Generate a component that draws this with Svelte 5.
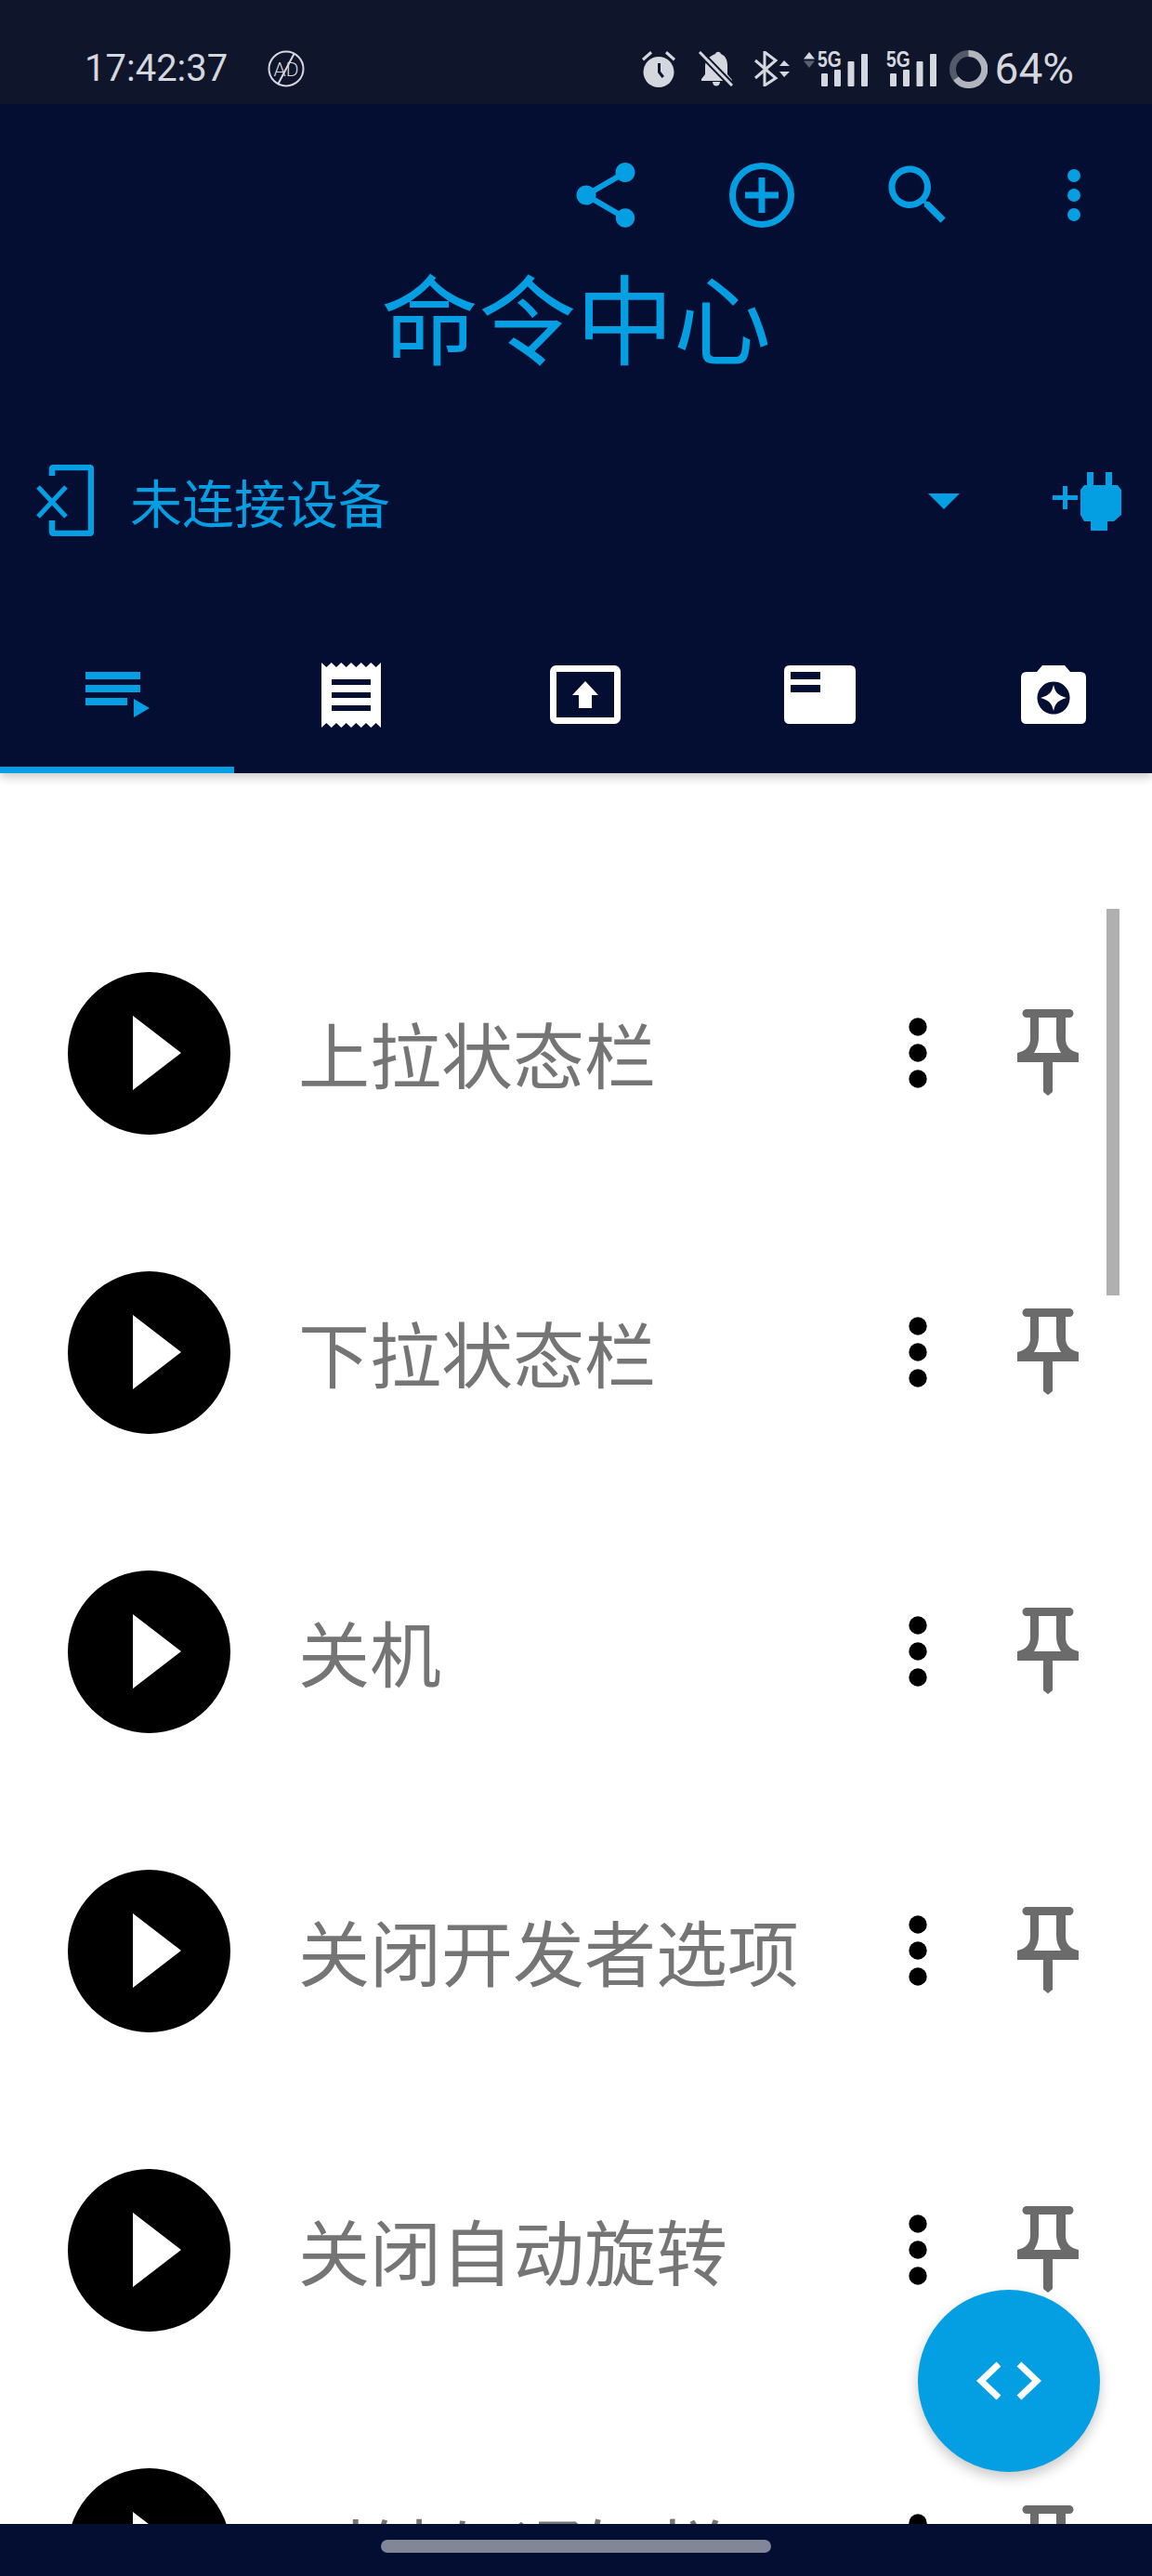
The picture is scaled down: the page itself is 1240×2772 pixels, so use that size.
<script>
  const commands = ['上拉状态栏', '下拉状态栏', '关机', '关闭开发者选项', '关闭自动旋转', '时钟与通知栏'];
</script>

<div class="page">
  <header class="top">
    <div class="status">
      <span class="clock">17:42:37</span>
      <svg class="ad" width="40" height="40" viewBox="0 0 40 40">
        <circle cx="20" cy="20" r="18.500" fill="none" stroke="#d5d7de" stroke-width="2" />
        <path d="M29 3 11 37" stroke="#d5d7de" stroke-width="2" />
        <text x="20" y="28" text-anchor="middle" class="ad-text">AD</text>
      </svg>
      <div class="status-right">
        <svg width="36" height="40" viewBox="0 0 36 40" fill="#d5d7de">
          <circle cx="18" cy="23.500" r="16.500" />
          <path d="M0 9 9 1l2 2.500L2 11.500zM36 9 27 1l-2 2.500 9 8z" />
          <path d="M17 14h3v9l4 5-2.500 2-4.500-6z" fill="#0f152b" />
        </svg>
        <svg class="s-bell" width="37" height="38" viewBox="0 0 37 38" fill="#d5d7de">
          <path d="M18 3c1-3 5-3 6 0 5 2 7 7 7 12v10l5 6v1H3v-2l4-5v-9C7 10 12 5 18 3z" />
          <path d="M15 33h8c0 6-8 6-8 0z" />
          <path d="M1 1 36 37" stroke="#0f152b" stroke-width="7" />
          <path d="M1 1 36 37" stroke="#d5d7de" stroke-width="3" />
        </svg>
        <svg class="s-bt" width="39" height="38" viewBox="0 0 39 38" fill="none">
          <path d="M1 10 23 29 11 37V1l12 9L1 29" stroke="#d5d7de" stroke-width="3" />
          <path d="M27 16l5-6 6 6zM27 22l5 6 6-6z" fill="#d5d7de" />
        </svg>
        <div class="signal s-sig1">
          <svg class="arrows" width="12" height="17" viewBox="0 0 12 17">
            <path d="M0 7.500 6 0l6 7.500z" fill="#d5d7de" />
            <path d="M0 9.500l6 7.500 6-7.500z" fill="#5a5f70" />
          </svg>
          <span class="five-g">5G</span>
          <svg class="bars" width="50" height="35" viewBox="0 0 50 35" fill="#d5d7de">
            <rect x="0" y="21" width="7" height="14" rx="1" />
            <rect x="14" y="17" width="7" height="18" rx="1" />
            <rect x="28.500" y="8" width="7" height="27" rx="1" />
            <rect x="43" y="0" width="7" height="35" rx="1" />
          </svg>
        </div>
        <div class="signal s-sig2">
          <span class="five-g">5G</span>
          <svg class="bars" width="50" height="35" viewBox="0 0 50 35" fill="#d5d7de">
            <rect x="0" y="21" width="7" height="14" rx="1" />
            <rect x="14" y="17" width="7" height="18" rx="1" />
            <rect x="28.500" y="8" width="7" height="27" rx="1" />
            <rect x="43" y="0" width="7" height="35" rx="1" />
          </svg>
        </div>
        <svg class="s-ring" width="41" height="41" viewBox="0 0 41 41" fill="none">
          <circle cx="20.500" cy="20.500" r="17" stroke="#555a6b" stroke-width="7" />
          <path d="M20.500 3.500a17 17 0 1 1-13.500 27" stroke="#b3b5bd" stroke-width="7" />
        </svg>
        <span class="battery">64%</span>
      </div>
    </div>

    <div class="actions">
      <button class="action" aria-label="分享">
        <svg width="84" height="84" viewBox="0 0 24 24" fill="#049fe3">
          <path d="M18 16.080c-.76 0-1.440.3-1.960.77L8.910 12.700c.05-.23.09-.46.09-.7s-.04-.47-.09-.7l7.050-4.110c.54.5 1.250.81 2.040.81 1.660 0 3-1.340 3-3s-1.340-3-3-3-3 1.340-3 3c0 .24.04.47.09.7L8.040 9.810C7.500 9.310 6.790 9 6 9c-1.660 0-3 1.340-3 3s1.340 3 3 3c.79 0 1.500-.31 2.040-.81l7.120 4.160c-.05.21-.08.43-.08.65 0 1.610 1.310 2.920 2.920 2.920s2.920-1.310 2.920-2.920-1.310-2.920-2.920-2.920z" />
        </svg>
      </button>
      <button class="action" aria-label="添加">
        <svg width="84" height="84" viewBox="0 0 84 84" fill="none" stroke="#049fe3" stroke-width="7">
          <circle cx="42" cy="42" r="31.500" />
          <path d="M42 23v38M24 42h36" />
        </svg>
      </button>
      <button class="action" aria-label="搜索">
        <svg width="84" height="84" viewBox="0 0 24 24" fill="#049fe3">
          <path d="M15.500 14h-.79l-.28-.27C15.410 12.590 16 11.110 16 9.500 16 5.910 13.090 3 9.500 3S3 5.910 3 9.500 5.910 16 9.500 16c1.610 0 3.090-.59 4.230-1.570l.27.28v.79l5 4.990L20.490 19l-4.990-5zm-6 0C7.010 14 5 11.990 5 9.500S7.010 5 9.500 5 14 7.010 14 9.500 11.990 14 9.500 14z" />
        </svg>
      </button>
      <button class="action" aria-label="更多">
        <svg width="84" height="84" viewBox="0 0 84 84" fill="#049fe3">
          <circle cx="42" cy="21" r="7" />
          <circle cx="42" cy="42" r="7" />
          <circle cx="42" cy="63" r="7" />
        </svg>
      </button>
    </div>

    <h1 class="title">命令中心</h1>

    <div class="device">
      <svg class="device-icon" width="63" height="77" viewBox="0 0 63 77" fill="none">
        <path d="M18 12V5q0-2 2-2h38q2 0 2 2v67q0 2-2 2H20q-2 0-2-2v-12" stroke="#049fe3" stroke-width="6.500" />
        <path d="M3 24 33 56M33 24 3 56" stroke="#049fe3" stroke-width="5" />
      </svg>
      <span class="device-name">未连接设备</span>
      <svg class="caret" width="34" height="17" viewBox="0 0 34 17">
        <path d="M0 0h34L17 17z" fill="#049fe3" />
      </svg>
      <svg class="plug" width="74" height="63" viewBox="0 0 74 63" fill="#049fe3">
        <path d="M0 25h27v5H0zM11 15h5v25h-5z" />
        <path d="M37 0h7v14h13V0h7v14h6l4 5v27l-8 7h-7v10H41V53h-7l-4-7V19l4-5h3z" />
      </svg>
    </div>

    <nav class="tabs">
      <div class="tab active">
        <svg width="69" height="49" viewBox="0 0 69 49" fill="#049fe3">
          <path d="M0 0h59v8H0zM0 14h59v8H0zM0 28h45v8H0zM52 29l17 10-17 10z" />
        </svg>
      </div>
      <div class="tab">
        <svg width="64" height="70" viewBox="0 0 64 70">
          <path fill="#fff" fill-rule="evenodd" d="M0 0l5.300 5 5.400-5L16 5l5.300-5 5.400 5L32 0l5.300 5 5.400-5L48 5l5.300-5 5.400 5L64 0v70l-5.300-5-5.400 5L48 65l-5.300 5-5.400-5L32 70l-5.300-5-5.400 5L16 65l-5.300 5-5.400-5L0 70zM11 18v6h42v-6zM11 32v6h42v-6zM11 46v6h42v-6z" />
        </svg>
      </div>
      <div class="tab">
        <svg width="76" height="63" viewBox="0 0 76 63">
          <rect x="3.500" y="3.500" width="69" height="56" rx="3" fill="none" stroke="#fff" stroke-width="7" />
          <path d="M38 17l14 15h-7v14H31V32h-7z" fill="#fff" />
        </svg>
      </div>
      <div class="tab">
        <svg width="77" height="63" viewBox="0 0 77 63">
          <path fill="#fff" fill-rule="evenodd" d="M6 0h65q6 0 6 6v51q0 6-6 6H6q-6 0-6-6V6q0-6 6-6zM7 7v8h32V7zM7 21v8h32v-8z" />
        </svg>
      </div>
      <div class="tab">
        <svg width="70" height="63" viewBox="0 0 70 63">
          <path fill="#fff" fill-rule="evenodd" d="M23 0h24l6 7h11q6 0 6 6v44q0 6-6 6H6q-6 0-6-6V13q0-6 6-6h11zM35 17.500a17.500 17.500 0 1 0 .01 0z" />
          <path fill="#fff" d="M35 21c2 8 4 11 14 14-10 3-12 6-14 14-2-8-4-11-14-14 10-3 12-6 14-14z" />
        </svg>
      </div>
    </nav>
  </header>

  <main class="list">
    {#each commands as name}
      <div class="row">
        <button class="play" aria-label="运行">
          <svg width="52" height="80" viewBox="0 0 52 80"><path d="M0 0 52 40 0 80z" fill="#fff" /></svg>
        </button>
        <span class="label">{name}</span>
        <svg class="dots" width="20" height="76" viewBox="0 0 20 76" fill="#000">
          <circle cx="10" cy="10" r="9.700" />
          <circle cx="10" cy="38" r="9.700" />
          <circle cx="10" cy="66" r="9.700" />
        </svg>
        <svg class="pin" width="66" height="94" viewBox="0 0 66 94">
          <path fill="#6b6b6b" fill-rule="evenodd" d="M10 0h46a4.500 4.500 0 0 1 0 9h-4v23c0 8 5 13 14 15v10H38v32l-5 4-5-4V57H0V47c9-2 14-7 14-15V9h-4a4.500 4.500 0 0 1 0-9zM23 9v22c0 6-2 11-5 16h29c-3-5-5-10-5-16V9z" />
        </svg>
      </div>
    {/each}
    <div class="scrollbar"></div>
    <button class="fab" aria-label="脚本">
      <svg width="70" height="42" viewBox="0 0 70 42" fill="none" stroke="#fff" stroke-width="7">
        <path d="M24 3 5 21l19 18M46 3l19 18-19 18" />
      </svg>
    </button>
  </main>

  <footer class="nav"><div class="handle"></div></footer>
</div>

<style>
  :global(body) {
    margin: 0;
    background: #fff;
  }
  .page {
    height: 2772px;
    display: flex;
    flex-direction: column;
    font-family: "Noto Sans CJK SC", "Noto Sans", sans-serif;
    overflow: hidden;
  }
  button {
    border: none;
    background: none;
    padding: 0;
    display: flex;
    align-items: center;
    justify-content: center;
  }
  svg {
    display: block;
    flex: none;
  }
  .top {
    background: #040e33;
    height: 832px;
    flex: none;
    position: relative;
    z-index: 2;
    box-shadow: 0 4px 10px rgba(0, 0, 0, 0.22);
    display: flex;
    flex-direction: column;
  }
  .status {
    height: 112px;
    flex: none;
    background: #0f152b;
    display: flex;
    align-items: center;
    padding: 36px 84px 0 91px;
    box-sizing: border-box;
    color: #d5d7de;
    font-family: Roboto, sans-serif;
  }
  .clock {
    font-size: 40px;
    line-height: 40px;
    width: 197px;
  }
  .ad-text {
    font-size: 21px;
    fill: #d5d7de;
    font-family: Roboto, sans-serif;
    font-weight: 300;
  }
  .status-right {
    margin-left: auto;
    display: flex;
    align-items: center;
  }
  .s-bell {
    margin-left: 25px;
  }
  .s-bt {
    margin-left: 23px;
  }
  .s-sig1 {
    margin-left: 14px;
    width: 69px;
  }
  .s-sig2 {
    margin-left: 20px;
    width: 54px;
  }
  .signal {
    position: relative;
    height: 38px;
  }
  .bars {
    position: absolute;
    right: 0;
    top: 3px;
  }
  .arrows {
    position: absolute;
    left: 0;
    top: 1px;
  }
  .five-g {
    position: absolute;
    top: -2px;
    font: 700 24px/22px "Liberation Sans", Roboto, sans-serif;
    transform: scaleX(0.8);
    transform-origin: left;
  }
  .s-sig1 .five-g {
    left: 15px;
  }
  .s-sig2 .five-g {
    left: 0;
  }
  .s-ring {
    margin-left: 14px;
  }
  .battery {
    margin-left: 8px;
    font-size: 46px;
    line-height: 40px;
  }
  .actions {
    display: flex;
    justify-content: flex-end;
    height: 84px;
    margin-top: 56px;
    flex: none;
  }
  .action {
    width: 168px;
    height: 84px;
  }
  .title {
    margin: 16px 0 0;
    height: 140px;
    flex: none;
    text-align: center;
    font-size: 105px;
    line-height: 140px;
    font-weight: 400;
    color: #049fe3;
  }
  .device {
    display: flex;
    align-items: center;
    height: 77px;
    padding-left: 38px;
    margin-top: 92px;
    flex: none;
  }
  .device-name {
    margin-left: 39px;
    font-size: 56px;
    line-height: 77px;
    color: #049fe3;
  }
  .caret {
    margin-left: auto;
    margin-top: 2px;
  }
  .plug {
    margin-left: 100px;
    margin-right: 33px;
    margin-top: 2px;
  }
  .tabs {
    margin-top: auto;
    height: 142px;
    display: flex;
    flex: none;
  }
  .tab {
    width: 252px;
    flex: none;
    display: flex;
    align-items: center;
    justify-content: center;
    padding-bottom: 27px;
    box-sizing: border-box;
  }
  .tab.active {
    box-shadow: inset 0 -7px 0 #049fe3;
  }
  .list {
    flex: 1;
    min-height: 0;
    position: relative;
    overflow: hidden;
    padding-top: 140px;
    box-sizing: border-box;
  }
  .row {
    height: 322px;
    display: flex;
    align-items: center;
    padding-left: 73px;
  }
  .play {
    width: 175px;
    height: 175px;
    border-radius: 50%;
    background: #000;
    flex: none;
    margin-right: 73px;
  }
  .play svg {
    margin-left: 17px;
  }
  .label {
    flex: 1;
    font-size: 77px;
    color: #757575;
    line-height: 100px;
  }
  .dots {
    margin-right: 97px;
  }
  .pin {
    margin-right: 79px;
  }
  .scrollbar {
    position: absolute;
    left: 1191px;
    top: 146px;
    width: 14px;
    height: 416px;
    background: #b0b0b0;
  }
  .fab {
    position: absolute;
    left: 988px;
    top: 1632px;
    width: 196px;
    height: 196px;
    border-radius: 50%;
    background: #049fe3;
    box-shadow: 0 6px 14px rgba(0, 0, 0, 0.22);
  }
  .nav {
    height: 56px;
    flex: none;
    background: #040e33;
    display: flex;
    justify-content: center;
    position: relative;
    z-index: 2;
  }
  .handle {
    width: 420px;
    height: 14px;
    margin-top: 17px;
    border-radius: 7px;
    background: #828798;
  }
</style>
